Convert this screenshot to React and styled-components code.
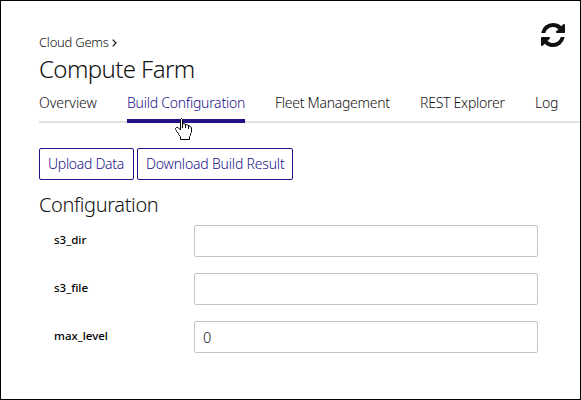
import React from "react";
import styled, { createGlobalStyle } from "styled-components";

const GlobalStyle = createGlobalStyle`
  * { box-sizing: border-box; }
  body { margin: 0; background: #fff; }
`;

const Page = styled.main`
  position: relative;
  width: 581px;
  height: 400px;
  padding: 32px 0 0 38px;
  border: 1px solid #000;
  overflow: hidden;
  background: #fff;
  color: #111;
  font-family: "Noto Sans", "Open Sans", sans-serif;
  font-weight: 300;
`;

const Text = styled.span`
  display: inline-block;
  white-space: nowrap;
  letter-spacing: ${(p) => p.$track || 0}px;
`;

const Header = styled.header`
  display: flex;
  justify-content: space-between;
  height: 53px;
`;

const Breadcrumb = styled.nav`
  display: flex;
  align-items: center;
  gap: 3px;
  height: 18px;
  font-size: 13px;
  line-height: 18px;
`;

const Chevron = styled.svg`
  width: 5px;
  height: 8px;
  margin-top: 1px;
  fill: none;
  stroke: #111;
  stroke-width: 1.2;
`;

const Title = styled.h1`
  margin: 1px 0 0;
  font-size: 24px;
  font-weight: 300;
  line-height: 34px;
`;

const Refresh = styled.button`
  width: 24px;
  height: 24px;
  margin: -10px 15px 0 0;
  padding: 0;
  border: 0;
  background: none;
  svg { display: block; width: 24px; height: 24px; fill: #111; }
`;

const Tabs = styled.nav`
  position: relative;
  display: flex;
  gap: 30px;
  height: 37px;
  background: linear-gradient(#e1e1e1, #e1e1e1) 0 35px / 100% 2px no-repeat;
`;

const Tab = styled.a`
  flex: none;
  width: ${(p) => p.$width}px;
  height: 37px;
  padding-top: 7px;
  font-size: 14px;
  line-height: 20px;
  color: ${(p) => (p.$active ? "#211387" : "#111")};
  border-bottom: ${(p) => (p.$active ? "4px solid #211387" : "0")};
`;

const Pointer = styled.svg`
  position: absolute;
  left: 136px;
  top: 32px;
  width: 18px;
  height: 22px;
`;

const Actions = styled.div`
  display: flex;
  gap: 3px;
  margin-top: 25px;
`;

const Button = styled.button`
  width: ${(p) => p.$width}px;
  height: 32px;
  padding: 0 0 0 8px;
  border: 1px solid #211387;
  border-radius: 2px;
  background: #fff;
  color: #211387;
  font: 300 14px/28px "Noto Sans", sans-serif;
  text-align: left;
`;

const Heading = styled.h2`
  margin: 10px 0 0;
  font-size: 20px;
  font-weight: 300;
  line-height: 30px;
`;

const Form = styled.form`
  display: grid;
  gap: 16px;
  margin-top: 5px;
  padding-left: 15px;
`;

const Field = styled.label`
  display: grid;
  grid-template-columns: 140px 344px;
  height: 32px;
  font-size: 11.5px;
  font-weight: 500;
  line-height: 29px;
  color: #000;
`;

const Input = styled.input`
  width: 344px;
  height: 32px;
  padding: 0 8px;
  border: 1px solid #c4c4c4;
  border-radius: 2px;
  outline: 0;
  background: #fff;
  color: #111;
  font: 300 14.5px "Noto Sans", sans-serif;
`;

const tabs = [
  { label: "Overview", width: 58, track: -0.05 },
  { label: "Build Configuration", width: 118, track: -0.25, active: true },
  { label: "Fleet Management", width: 115, track: -0.28 },
  { label: "REST Explorer", width: 85, track: -0.25 },
  { label: "Log", width: 24, track: -0.2 },
];

const fields = [
  { name: "s3_dir", value: "" },
  { name: "s3_file", value: "" },
  { name: "max_level", value: "0" },
];

export default function App() {
  return (
    <Page>
      <GlobalStyle />
      <Header>
        <div>
          <Breadcrumb>
            <Text $track={-0.25}>Cloud Gems</Text>
            <Chevron viewBox="0 0 5 8"><path d="M.7 .7 4 4 .7 7.3" /></Chevron>
          </Breadcrumb>
          <Title><Text $track={-0.6}>Compute Farm</Text></Title>
        </div>
        <Refresh type="button" aria-label="Refresh">
          <svg viewBox="0 128 1536 1536">
            <path d="M1511 1056q0 5-1 7-64 268-268 434.5t-478 166.5q-146 0-282.5-55t-243.5-157l-129 129q-19 19-45 19t-45-19-19-45v-448q0-26 19-45t45-19h448q26 0 45 19t19 45-19 45l-137 137q71 66 161 102t187 36q134 0 250-65t186-179q11-17 53-117 8-23 30-23h192q13 0 22.5 9.5t9.5 22.5zm25-800v448q0 26-19 45t-45 19h-448q-26 0-45-19t-19-45 19-45l138-138q-148-137-349-137-134 0-250 65t-186 179q-11 17-53 117-8 23-30 23h-199q-13 0-22.5-9.5t-9.5-22.5v-7q65-268 270-434.5t480-166.5q146 0 284 55.5t245 156.5l130-129q19-19 45-19t45 19 19 45z" />
          </svg>
        </Refresh>
      </Header>
      <Tabs>
        {tabs.map((t) => (
          <Tab key={t.label} $width={t.width} $active={t.active}>
            <Text $track={t.track}>{t.label}</Text>
          </Tab>
        ))}
        <Pointer viewBox="0 0 18 22">
          <path
            d="M5.5 1.5 6.5 .5 7.5 1.5V5.5L10 6 10.5 6.5 13 7 13.5 7.5 15.5 8.5 16.5 10V14.5L15.5 15.5V17.5L14.5 18.5V21.5H5.5V18.5L3.5 16.5V15.5L1.5 13.5V12.5L.5 11.5V10.5L1.5 9.5H3L5.5 12Z"
            fill="#fff"
            stroke="#000"
          />
          <path d="M7.5 5V10M10.5 6.5V10M13.5 7.5V11" fill="none" stroke="#000" />
        </Pointer>
      </Tabs>
      <Actions>
        <Button type="button" $width={95}><Text $track={-0.3}>Upload Data</Text></Button>
        <Button type="button" $width={156}><Text $track={-0.19}>Download Build Result</Text></Button>
      </Actions>
      <Heading><Text $track={-0.38}>Configuration</Text></Heading>
      <Form>
        {fields.map((f) => (
          <Field key={f.name}>
            <Text $track={0}>{f.name}</Text>
            <Input defaultValue={f.value} />
          </Field>
        ))}
      </Form>
    </Page>
  );
}
